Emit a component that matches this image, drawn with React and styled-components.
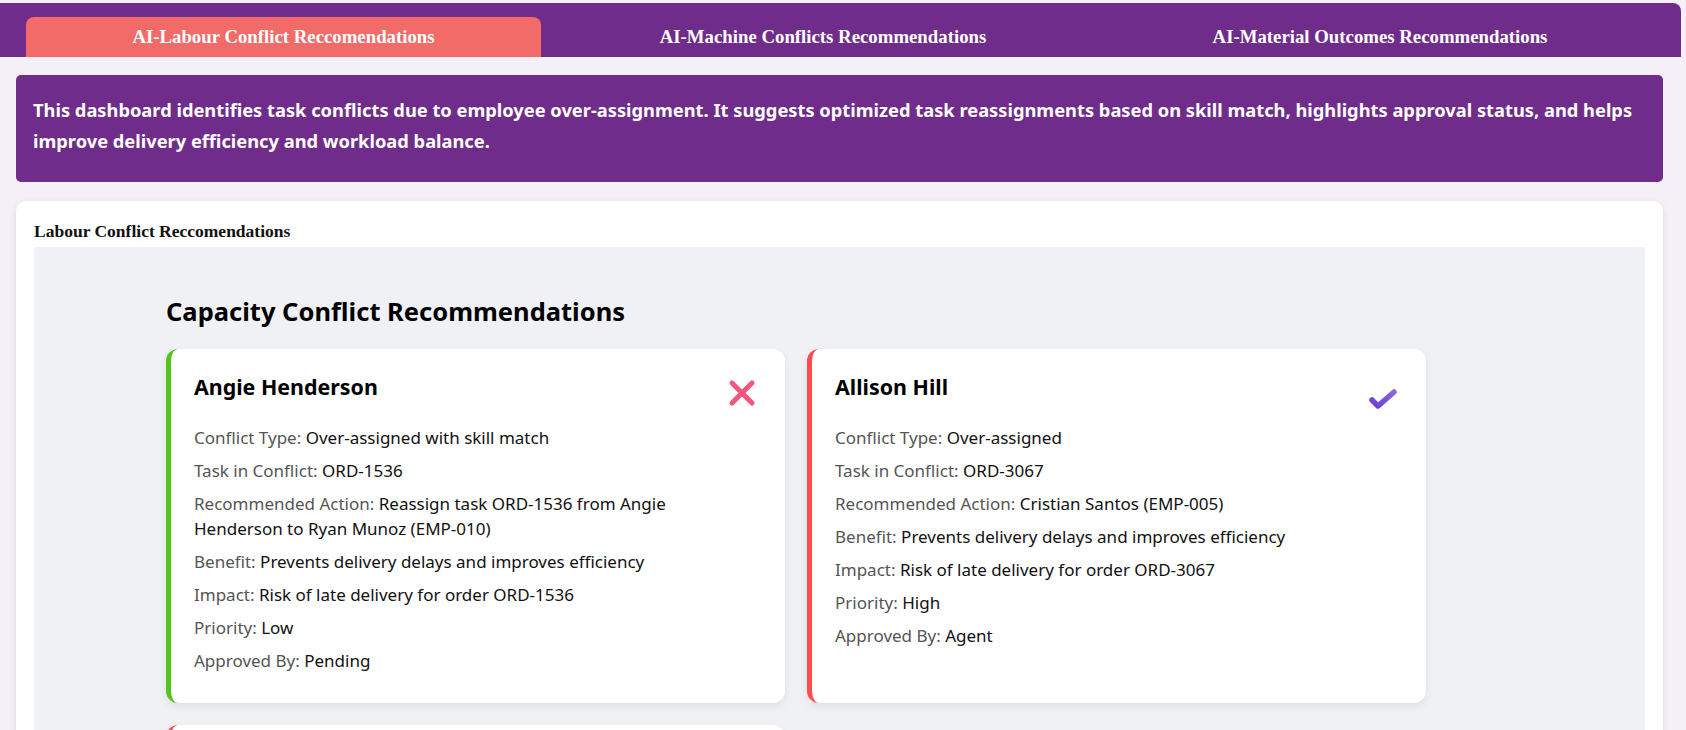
import React from 'react'
import styled, { createGlobalStyle } from 'styled-components'

const GlobalStyle = createGlobalStyle`
  body {
    margin: 0;
    background: #f5f0f7;
    font-family: "Noto Sans", "Open Sans", sans-serif;
  }
`

const Page = styled.div`
  padding-top: 3px;
`

const TabBar = styled.div`
  display: grid;
  grid-template-columns: 515fr 564fr 550fr;
  background: #6f2c8a;
  padding: 14px 26px 0 26px;
  margin-right: 5px;
  border-top-right-radius: 8px;
  height: 54px;
  box-sizing: border-box;
`

const Tab = styled.div`
  display: flex;
  align-items: center;
  justify-content: center;
  font-family: "Liberation Serif", "DejaVu Serif", serif;
  font-weight: 700;
  font-size: 18.8px;
  color: #fff;
  border-radius: 8px 8px 0 0;
  background: ${p => (p.$active ? '#f26b68' : 'transparent')};
`

const Content = styled.div`
  padding: 18px 23px 0 16px;
`

const Banner = styled.div`
  background: #6f2c8a;
  color: #fff;
  border-radius: 5px;
  padding: 19px 17px 26px 17px;
  font-weight: 700;
  font-size: 18.3px;
  line-height: 31px;
`

const Panel = styled.div`
  margin-top: 19px;
  background: #fff;
  border-radius: 10px;
  box-shadow: 0 2px 6px rgba(0, 0, 0, 0.1);
  padding: 20px 18px 0 18px;
`

const PanelTitle = styled.div`
  font-family: "Liberation Serif", "DejaVu Serif", serif;
  font-weight: 700;
  font-size: 17.5px;
  line-height: 20px;
  color: #111;
  margin-bottom: 6px;
`

const Canvas = styled.div`
  background: #f0f1f5;
  padding: 47px 0 40px 132px;
`

const Heading = styled.h2`
  margin: 0 0 21px 0;
  font-size: 25.5px;
  line-height: 34px;
  font-weight: 700;
  color: #000;
`

const Grid = styled.div`
  display: grid;
  grid-template-columns: 619px 619px;
  gap: 22px;
`

const Card = styled.div`
  background: #fff;
  border-left: 5px solid ${p => p.$accent};
  border-radius: 12px;
  box-shadow: 0 3px 8px rgba(0, 0, 0, 0.08);
  padding: 24px 24px 22px 23px;
`

const CardHead = styled.div`
  display: flex;
  justify-content: space-between;
  align-items: flex-start;
  height: 28px;
  margin-bottom: 24px;
`

const Name = styled.h3`
  margin: 0;
  font-size: 21.4px;
  line-height: 28px;
  font-weight: 700;
  color: #000;
`

const IconWrap = styled.div`
  width: 32px;
  height: 32px;
  flex-shrink: 0;
  margin-top: ${p => (p.$low ? '9px' : '4px')};
  margin-right: 3px;
  display: flex;
  align-items: center;
  justify-content: center;
`

const Row = styled.p`
  margin: 0 0 8px 0;
  padding-right: 20px;
  font-size: 17px;
  line-height: 25px;
  color: #111;
`

const Label = styled.span`
  color: #555;
`

const CrossIcon = () => (
  <svg width="30" height="30" viewBox="0 0 30 30">
    <path d="M5 5 L25 25 M25 5 L5 25" stroke="#f4577a" strokeWidth="5" strokeLinecap="round" />
  </svg>
)

const CheckIcon = () => (
  <svg width="30" height="26" viewBox="0 0 30 26">
    <defs>
      <linearGradient id="chk" x1="0" y1="1" x2="1" y2="0">
        <stop offset="0" stopColor="#6b3fd0" />
        <stop offset="1" stopColor="#8a6ad8" />
      </linearGradient>
    </defs>
    <path d="M4 15 L10 21 L26 7" fill="none" stroke="url(#chk)" strokeWidth="5.5" strokeLinecap="round" strokeLinejoin="round" />
  </svg>
)

const cards = [
  {
    name: 'Angie Henderson',
    accent: '#52c41a',
    approved: false,
    rows: [
      ['Conflict Type', 'Over-assigned with skill match'],
      ['Task in Conflict', 'ORD-1536'],
      ['Recommended Action', 'Reassign task ORD-1536 from Angie Henderson to Ryan Munoz (EMP-010)'],
      ['Benefit', 'Prevents delivery delays and improves efficiency'],
      ['Impact', 'Risk of late delivery for order ORD-1536'],
      ['Priority', 'Low'],
      ['Approved By', 'Pending'],
    ],
  },
  {
    name: 'Allison Hill',
    accent: '#ff4d4f',
    approved: true,
    rows: [
      ['Conflict Type', 'Over-assigned'],
      ['Task in Conflict', 'ORD-3067'],
      ['Recommended Action', 'Cristian Santos (EMP-005)'],
      ['Benefit', 'Prevents delivery delays and improves efficiency'],
      ['Impact', 'Risk of late delivery for order ORD-3067'],
      ['Priority', 'High'],
      ['Approved By', 'Agent'],
    ],
  },
  {
    name: 'Brian Walker',
    accent: '#ff4d4f',
    approved: false,
    rows: [
      ['Conflict Type', 'Over-assigned'],
      ['Task in Conflict', 'ORD-2210'],
    ],
  },
]

export default function App() {
  return (
    <Page>
      <GlobalStyle />
      <TabBar>
        <Tab $active>AI-Labour Conflict Reccomendations</Tab>
        <Tab>AI-Machine Conflicts Recommendations</Tab>
        <Tab>AI-Material Outcomes Recommendations</Tab>
      </TabBar>
      <Content>
        <Banner>
          This dashboard identifies task conflicts due to employee over-assignment. It suggests optimized task
          reassignments based on skill match, highlights approval status, and helps improve delivery efficiency and
          workload balance.
        </Banner>
        <Panel>
          <PanelTitle>Labour Conflict Reccomendations</PanelTitle>
          <Canvas>
            <Heading>Capacity Conflict Recommendations</Heading>
            <Grid>
              {cards.map(c => (
                <Card key={c.name} $accent={c.accent}>
                  <CardHead>
                    <Name>{c.name}</Name>
                    <IconWrap $low={c.approved}>{c.approved ? <CheckIcon /> : <CrossIcon />}</IconWrap>
                  </CardHead>
                  {c.rows.map(([k, v]) => (
                    <Row key={k}>
                      <Label>{k}:</Label> {v}
                    </Row>
                  ))}
                </Card>
              ))}
            </Grid>
          </Canvas>
        </Panel>
      </Content>
    </Page>
  )
}
